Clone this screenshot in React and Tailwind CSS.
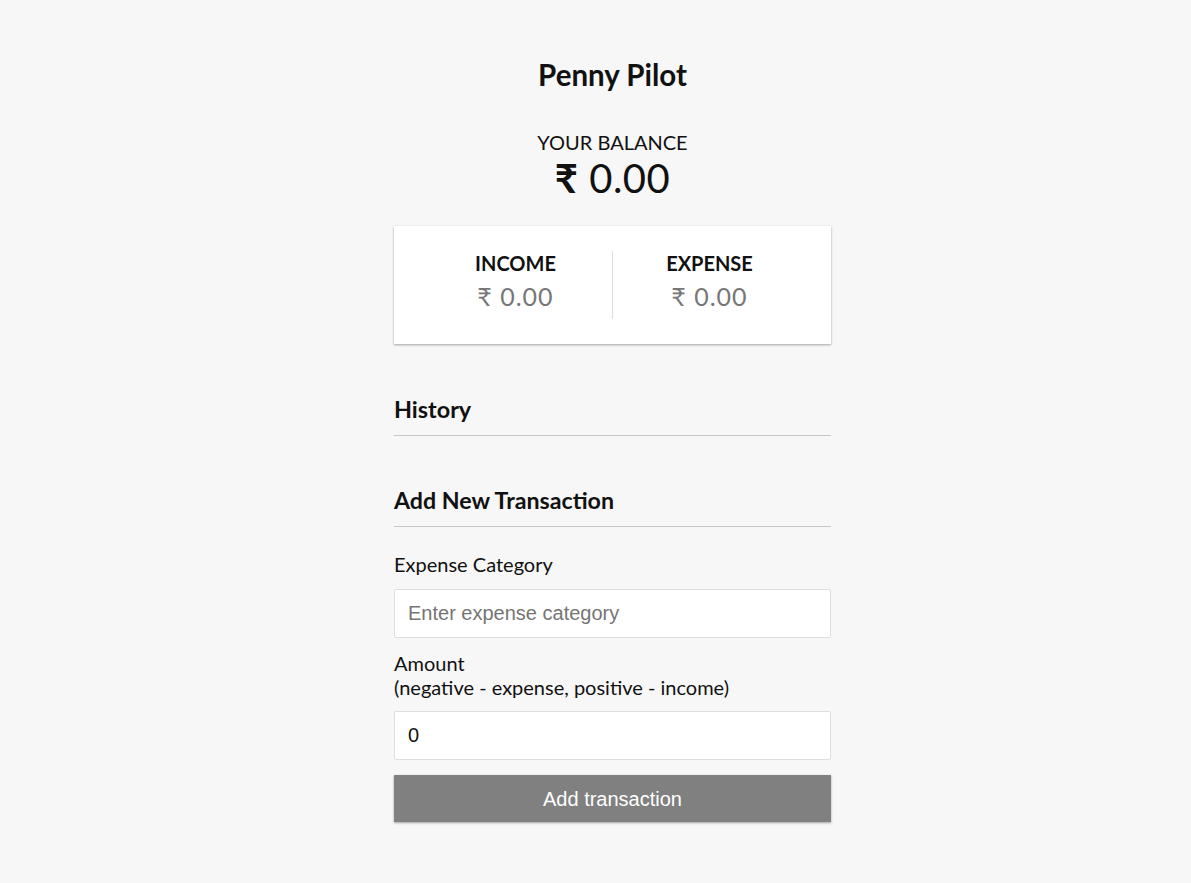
const shadow = "shadow-[0_1px_3px_rgba(0,0,0,0.12),0_1px_2px_rgba(0,0,0,0.24)]";

const Summary = ({ label, amount }) => (
  <div className="flex-1 text-center">
    <h4 className="text-[20px] leading-[24px] font-bold uppercase">{label}</h4>
    <p className="text-[25px] leading-[30px] text-[#777] tracking-[1px] mt-[6px] mb-[8px]">₹ {amount}</p>
  </div>
);

const App = () => {
  return (
    <div className="min-h-screen w-full bg-[#f7f7f7] pl-[34px] font-['Lato','Noto_Sans',sans-serif] text-[#111]">
      <div className="mx-auto w-[437px] pt-[57px] pb-[60px]">
        <h2 className="text-center text-[29.5px] leading-[36px] font-bold">Penny Pilot</h2>

        <h4 className="mt-[37px] text-center text-[20px] leading-[24px] uppercase">Your Balance</h4>
        <h1 className="text-center text-[40px] leading-[48px] tracking-[0.5px]">
          <span className="font-bold">₹</span> 0.00
        </h1>

        <div className={`mt-[24px] flex bg-white p-[25px] ${shadow}`}>
          <Summary label="Income" amount="0.00" />
          <div className="w-px bg-[#dedede]" />
          <Summary label="Expense" amount="0.00" />
        </div>

        <h3 className="mt-[51px] border-b border-[#c8c8c8] pb-[12px] text-[23.4px] leading-[28px] font-bold">History</h3>

        <h3 className="mt-[50px] border-b border-[#c8c8c8] pb-[12px] text-[23.2px] leading-[28px] font-bold">Add New Transaction</h3>

        <form onSubmit={(e) => e.preventDefault()}>
          <label className="mt-[25px] block text-[20px] leading-[24px]">Expense Category</label>
          <input
            type="text"
            placeholder="Enter expense category"
            className="mt-[13px] block h-[49px] w-full rounded-[2px] border border-[#dedede] bg-white px-[13px] font-['Liberation_Sans',Arial,sans-serif] text-[20px] placeholder:text-[#757575] outline-none"
          />

          <label className="mt-[13px] block text-[20px] leading-[24px]">
            Amount <br />
            (negative - expense, positive - income)
          </label>
          <input
            type="number"
            defaultValue="0"
            className="mt-[12px] block h-[49px] w-full rounded-[2px] border border-[#dedede] bg-white px-[13px] font-['Liberation_Sans',Arial,sans-serif] text-[20px] outline-none"
          />

          <button
            type="submit"
            className={`mt-[15px] block h-[47px] w-full bg-[#808080] font-['Liberation_Sans',Arial,sans-serif] text-[20px] text-white ${shadow}`}
          >
            Add transaction
          </button>
        </form>
      </div>
    </div>
  );
};

export default App;
